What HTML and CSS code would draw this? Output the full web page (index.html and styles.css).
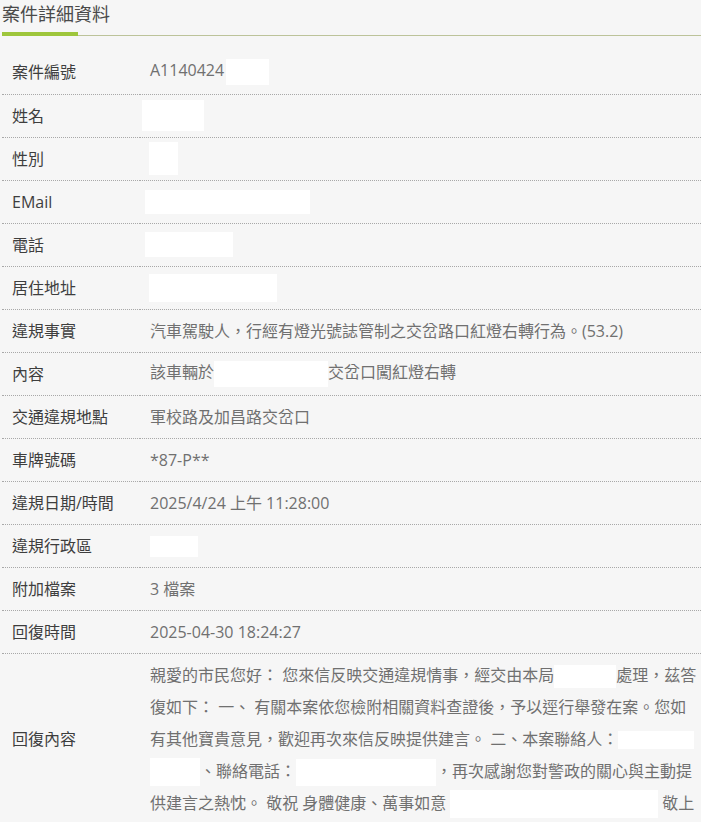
FILE: index.html
```html
<!DOCTYPE html>
<html lang="zh-Hant">
<head>
<meta charset="utf-8">
<title>案件詳細資料</title>
<link rel="stylesheet" href="styles.css">
</head>
<body>
<div class="page">
  <div class="section-title"><h2>案件詳細資料</h2></div>
  <table class="detail">
    <tbody>
      <tr><th>案件編號</th><td>A1140424<span class="mask m-id"></span></td></tr>
      <tr><th>姓名</th><td><span class="mask m-name"></span></td></tr>
      <tr><th>性別</th><td><span class="mask m-sex"></span></td></tr>
      <tr><th>EMail</th><td><span class="mask m-mail"></span></td></tr>
      <tr><th>電話</th><td><span class="mask m-tel"></span></td></tr>
      <tr><th>居住地址</th><td><span class="mask m-addr"></span></td></tr>
      <tr><th>違規事實</th><td>汽車駕駛人，行經有燈光號誌管制之交岔路口紅燈右轉行為。(53.2)</td></tr>
      <tr><th>內容</th><td>該車輛於<span class="mask m-place"></span>交岔口闖紅燈右轉</td></tr>
      <tr><th>交通違規地點</th><td>軍校路及加昌路交岔口</td></tr>
      <tr><th>車牌號碼</th><td>*87-P**</td></tr>
      <tr><th>違規日期/時間</th><td>2025/4/24 上午 11:28:00</td></tr>
      <tr><th>違規行政區</th><td><span class="mask m-dist"></span></td></tr>
      <tr><th>附加檔案</th><td>3 檔案</td></tr>
      <tr><th>回復時間</th><td>2025-04-30 18:24:27</td></tr>
      <tr class="reply"><th>回復內容</th><td>親愛的市民您好： 您來信反映交通違規情事，經交由本局<span class="mask m-unit"></span>處理，茲答復如下： 一、 有關本案依您檢附相關資料查證後，予以逕行舉發在案。您如有其他寶貴意見，歡迎再次來信反映提供建言。 二、本案聯絡人：<span class="mask m-contact"></span><span class="mask m-contact2"></span>、聯絡電話：<span class="mask m-phone"></span>，再次感謝您對警政的關心與主動提供建言之熱忱。 敬祝 身體健康、萬事如意<span class="mask m-sign"></span>敬上</td></tr>
    </tbody>
  </table>
</div>
</body>
</html>
```
FILE: styles.css
```css
html, body {
  margin: 0;
  padding: 0;
  background: #f6f6f6;
}

body {
  font-family: "Open Sans", "Noto Sans CJK TC", sans-serif;
  font-size: 16px;
  color: #6f6f6f;
}

.page {
  padding-left: 2px;
  overflow: hidden;
}

.section-title {
  border-bottom: 1px solid #bcc39a;
  padding-top: 2px;
}

.section-title h2 {
  margin: 0;
  font-size: 18px;
  line-height: 24px;
  font-weight: normal;
  color: #4a4a4a;
}

.section-title::after {
  content: "";
  display: block;
  width: 76px;
  height: 4px;
  margin-top: 6px;
  margin-bottom: -1px;
  background: #9ec63c;
}

.detail {
  width: 100%;
  margin-top: 15px;
  border-collapse: collapse;
}

.detail th,
.detail td {
  height: 43px;
  padding: 0 10px;
  line-height: 22px;
  border-bottom: 1px dotted #a8a8a8;
  vertical-align: middle;
  text-align: left;
  box-sizing: border-box;
}

.detail th {
  width: 138px;
  font-weight: normal;
  color: #3e3e3e;
  white-space: nowrap;
}

.detail td {
  color: #707070;
}

.detail .reply td {
  padding: 5px 0 5px 10px;
  line-height: 32px;
}

.mask {
  display: inline-block;
  background: #ffffff;
  vertical-align: middle;
  height: 25px;
}

.m-id { width: 43px; height: 26px; margin-left: 2px; }
.m-name { width: 62px; height: 31px; margin-left: -8px; }
.m-sex { width: 29px; height: 33px; margin-left: -1px; }
.m-mail { width: 165px; height: 24px; margin-left: -5px; }
.m-tel { width: 88px; height: 25px; margin-left: -5px; }
.m-addr { width: 128px; height: 28px; margin-left: -1px; }
.m-place { width: 114px; height: 26px; }
.m-dist { width: 48px; height: 21px; }
.m-unit { width: 62px; height: 23px; }
.m-contact { width: 76px; height: 18px; }
.m-contact2 { width: 50px; height: 28px; }
.m-phone { width: 140px; height: 27px; }
.m-sign { width: 208px; height: 28px; margin: 0 4px; }
```
